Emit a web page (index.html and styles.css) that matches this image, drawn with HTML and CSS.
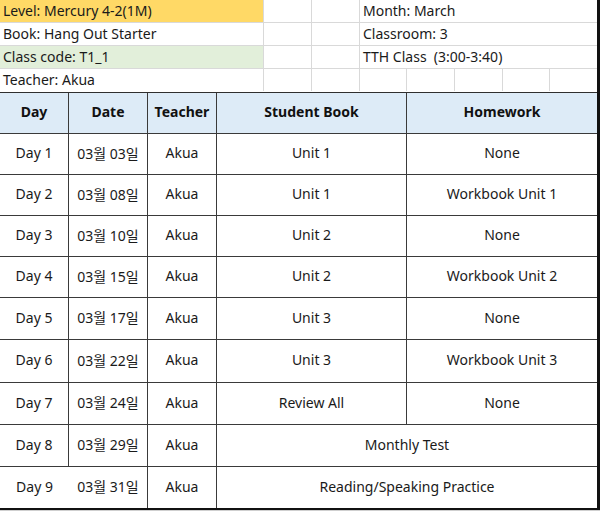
FILE: index.html
```html
<!DOCTYPE html>
<html lang="ko">
<head>
<meta charset="utf-8">
<link rel="stylesheet" href="styles.css">
</head>
<body>
<div class="sheet">
  <div class="info">
    <div class="c c-wide lvl">Level: Mercury 4-2(1M)</div>
    <div class="c"></div>
    <div class="c"></div>
    <div class="c c-span">Month: March</div>

    <div class="c c-wide">Book: Hang Out Starter</div>
    <div class="c"></div>
    <div class="c"></div>
    <div class="c c-span">Classroom: 3</div>

    <div class="c c-wide code">Class code: T1_1</div>
    <div class="c"></div>
    <div class="c"></div>
    <div class="c c-span">TTH Class&nbsp; (3:00-3:40)</div>

    <div class="c c-wide last">Teacher: Akua</div>
    <div class="c last"></div>
    <div class="c last"></div>
    <div class="c last"></div>
    <div class="c last"></div>
    <div class="c last"></div>
    <div class="c last"></div>
    <div class="c last"></div>
  </div>

  <div class="plan">
    <div class="h r0">Day</div>
    <div class="h r0">Date</div>
    <div class="h r0">Teacher</div>
    <div class="h r0">Student Book</div>
    <div class="h r0">Homework</div>

    <div class="d r1">Day 1</div><div class="d r1">03월 03일</div><div class="d r1">Akua</div><div class="d r1">Unit 1</div><div class="d r1">None</div>
    <div class="d r2">Day 2</div><div class="d r2">03월 08일</div><div class="d r2">Akua</div><div class="d r2">Unit 1</div><div class="d r2">Workbook Unit 1</div>
    <div class="d r3">Day 3</div><div class="d r3">03월 10일</div><div class="d r3">Akua</div><div class="d r3">Unit 2</div><div class="d r3">None</div>
    <div class="d r4">Day 4</div><div class="d r4">03월 15일</div><div class="d r4">Akua</div><div class="d r4">Unit 2</div><div class="d r4">Workbook Unit 2</div>
    <div class="d r5">Day 5</div><div class="d r5">03월 17일</div><div class="d r5">Akua</div><div class="d r5">Unit 3</div><div class="d r5">None</div>
    <div class="d r6">Day 6</div><div class="d r6">03월 22일</div><div class="d r6">Akua</div><div class="d r6">Unit 3</div><div class="d r6">Workbook Unit 3</div>
    <div class="d r7">Day 7</div><div class="d r7">03월 24일</div><div class="d r7">Akua</div><div class="d r7">Review All</div><div class="d r7">None</div>
    <div class="d r8">Day 8</div><div class="d r8">03월 29일</div><div class="d r8">Akua</div><div class="d r8 merged">Monthly Test</div>
    <div class="d r9 lastrow">Day 9</div><div class="d r9 lastrow">03월 31일</div><div class="d r9 lastrow">Akua</div><div class="d r9 lastrow merged">Reading/Speaking Practice</div>
  </div>
</div>
<div class="under"></div>
</body>
</html>
```

FILE: styles.css
```css
html, body {
  margin: 0;
  padding: 0;
  background: #ffffff;
}

body {
  font-family: "Noto Sans", "Noto Sans CJK KR", sans-serif;
  font-size: 14px;
  color: #1a1a1a;
  width: 600px;
}

.sheet {
  width: 597px;
  border-right: 3px solid #111;
}

.info {
  display: grid;
  grid-template-columns: 264px 48px 48px 47px 48px 48px 47px 47px;
  grid-auto-rows: 23px;
}

.c {
  box-sizing: border-box;
  border-right: 1px solid #d9d9d9;
  border-bottom: 1px solid #d9d9d9;
  padding: 0 3px;
  line-height: 21px;
  white-space: nowrap;
  overflow: hidden;
}

.c-span {
  grid-column: span 5;
  border-right: none;
}

.c.last {
  border-bottom: none;
  height: 22px;
}

.c.last:last-child {
  border-right: none;
}

.lvl {
  background: #ffd966;
}

.code {
  background: #e2efda;
}

.plan {
  display: grid;
  grid-template-columns: 69px 79px 69px 190px 190px;
  grid-template-rows: 41px 41px 41px 41px 41px 42px 43px 42px 42px 41px;
  border-top: 1px solid #2f2f2f;
  border-bottom: 2px solid #111;
}

.h, .d {
  box-sizing: border-box;
  border-right: 1px solid #3a3a3a;
  border-bottom: 1px solid #3a3a3a;
  display: flex;
  align-items: center;
  justify-content: center;
  white-space: nowrap;
  padding-bottom: 3px;
}

.h {
  background: #ddebf7;
  font-weight: 700;
  color: #111;
  padding-bottom: 4px;
}

.h:nth-child(5n), .d:nth-child(5n) {
  border-right: none;
}

.merged {
  grid-column: span 2;
  border-right: none;
}

.lastrow {
  border-bottom: none;
}

.under {
  width: 600px;
  height: 1px;
  background: #cfcfcf;
}
```
